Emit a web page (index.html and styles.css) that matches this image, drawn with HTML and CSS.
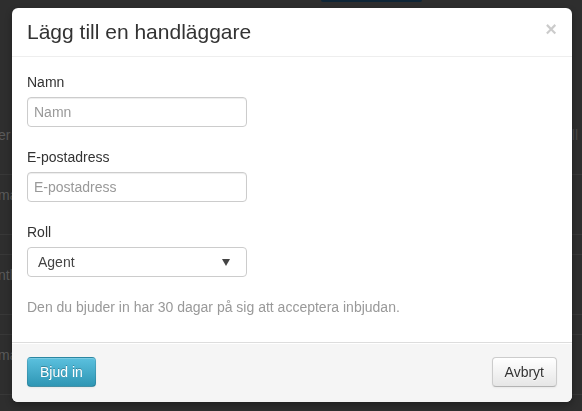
FILE: index.html
```html
<!DOCTYPE html>
<html lang="sv">
<head>
<meta charset="utf-8">
<title>Lägg till en handläggare</title>
<link rel="stylesheet" href="styles.css">
</head>
<body>
<div class="page">
  <div class="topbar"><div class="topbtn"></div></div>
  <div class="rows">
    <div class="row tall"><span class="cell-l">er</span><span class="cell-r">ll</span></div>
    <div class="row tall"><span class="cell-l">ma</span></div>
    <div class="row short"></div>
    <div class="row tall"><span class="cell-l">ntly</span></div>
    <div class="row short"></div>
    <div class="row tall"><span class="cell-l">ma</span></div>
  </div>
</div>

<div class="modal">
  <div class="modal-header">
    <h3 class="modal-title">Lägg till en handläggare</h3>
    <button class="close" type="button">×</button>
  </div>
  <div class="modal-body">
    <div class="form-group">
      <label class="label">Namn</label>
      <input class="input" type="text" placeholder="Namn">
    </div>
    <div class="form-group">
      <label class="label">E-postadress</label>
      <input class="input" type="text" placeholder="E-postadress">
    </div>
    <div class="form-group">
      <label class="label">Roll</label>
      <div class="select-wrap">
        <select class="select"><option>Agent</option></select>
        <svg class="select-arrow" width="8" height="7" viewBox="0 0 8 7"><polygon points="0,0 8,0 4,7" fill="#444"/></svg>
      </div>
    </div>
    <p class="help">Den du bjuder in har 30 dagar på sig att acceptera inbjudan.</p>
  </div>
  <div class="modal-footer">
    <button class="btn btn-info" type="button">Bjud in</button>
    <button class="btn btn-default" type="button">Avbryt</button>
  </div>
</div>
</body>
</html>
```

FILE: styles.css
```css
html, body {
  margin: 0;
  padding: 0;
}
body {
  background: #2e2e2e;
  font-family: "Liberation Sans", Arial, sans-serif;
  font-size: 14px;
  line-height: 20px;
  color: #333;
  height: 411px;
  overflow: hidden;
}
.page {
  display: flex;
  flex-direction: column;
}
.topbar {
  height: 2px;
  display: flex;
}
.topbtn {
  margin-left: 321px;
  width: 101px;
  height: 2px;
  background: #0e2536;
  border-radius: 0 0 3px 3px;
}
.rows {
  margin-top: 113px;
  display: flex;
  flex-direction: column;
}
.row {
  border-bottom: 1px solid #383838;
  display: flex;
  justify-content: space-between;
  align-items: flex-start;
  color: #5a5a5a;
}
.row.tall { height: 59px; }
.row.short { height: 19px; }
.cell-l {
  margin-top: 10px;
  margin-left: -2px;
}
.cell-r {
  margin-top: 10px;
  margin-right: 4px;
  color: #4a4a4a;
}

.modal {
  position: fixed;
  left: 12px;
  top: 8px;
  width: 560px;
  background: #fff;
  border-radius: 6px;
  box-shadow: 0 3px 7px rgba(0, 0, 0, 0.3);
  overflow: hidden;
}
.modal-header {
  padding: 9px 15px;
  border-bottom: 1px solid #eee;
  display: flex;
  justify-content: space-between;
  align-items: flex-start;
}
.modal-title {
  margin: 0;
  font-size: 21px;
  line-height: 30px;
  font-weight: normal;
  color: #333;
}
.close {
  margin-top: 2px;
  padding: 0;
  border: 0;
  background: none;
  font-family: "Liberation Sans", Arial, sans-serif;
  font-size: 20px;
  font-weight: bold;
  line-height: 20px;
  color: #000;
  opacity: 0.2;
  text-shadow: 0 1px 0 #fff;
}
.modal-body {
  padding: 15px;
}
.form-group {
  margin-bottom: 20px;
}
.label {
  display: block;
  margin-bottom: 5px;
  color: #333;
}
.input {
  box-sizing: border-box;
  display: block;
  width: 220px;
  height: 30px;
  padding: 4px 6px;
  margin: 0;
  font-family: "Liberation Sans", Arial, sans-serif;
  font-size: 14px;
  line-height: 20px;
  color: #555;
  background: #fff;
  border: 1px solid #ccc;
  border-radius: 4px;
  box-shadow: inset 0 1px 1px rgba(0, 0, 0, 0.075);
  outline: none;
}
.input::placeholder {
  color: #999;
}
.select-wrap {
  position: relative;
  width: 220px;
}
.select {
  box-sizing: border-box;
  display: block;
  width: 220px;
  height: 30px;
  margin: 0;
  padding: 4px 10px;
  font-family: "Liberation Sans", Arial, sans-serif;
  font-size: 14px;
  line-height: 20px;
  color: #444;
  background: #fff;
  border: 1px solid #ccc;
  border-radius: 4px;
  -webkit-appearance: none;
  appearance: none;
  outline: none;
}
.select-arrow {
  position: absolute;
  right: 17px;
  top: 12px;
}
.help {
  margin: 0 0 10px;
  color: #999;
}
.modal-footer {
  padding: 14px 15px 15px;
  background: #f5f5f5;
  border-top: 1px solid #ddd;
  box-shadow: inset 0 1px 0 #fff;
  display: flex;
  justify-content: space-between;
}
.btn {
  box-sizing: border-box;
  height: 30px;
  padding: 4px 12px;
  font-family: "Liberation Sans", Arial, sans-serif;
  font-size: 14px;
  line-height: 20px;
  border: 1px solid;
  border-radius: 4px;
  box-shadow: inset 0 1px 0 rgba(255, 255, 255, 0.2), 0 1px 2px rgba(0, 0, 0, 0.05);
}
.btn-info {
  color: #fff;
  text-shadow: 0 -1px 0 rgba(0, 0, 0, 0.25);
  background: linear-gradient(#5bc0de, #2f96b4);
  border-color: rgba(0, 0, 0, 0.1) rgba(0, 0, 0, 0.1) rgba(0, 0, 0, 0.25);
}
.btn-default {
  color: #333;
  text-shadow: 0 1px 1px rgba(255, 255, 255, 0.75);
  background: linear-gradient(#fff, #e6e6e6);
  border-color: #ccc #ccc #b3b3b3;
}
```
